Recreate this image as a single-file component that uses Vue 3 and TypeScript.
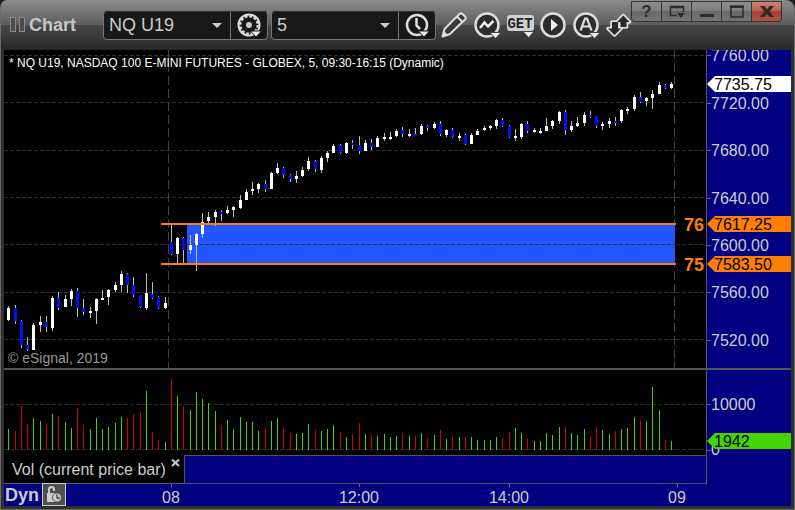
<script setup lang="ts">
import { ref } from 'vue'

type Bar = { x: number; high: number; low: number; top: number; bottom: number; up: boolean }
type VolumeBar = { x: number; top: number; up: boolean }

const symbol = ref('NQ U19')
const interval = ref('5')

const barX = (index: number): number => Math.round(4.335 + 6.253 * index)

// Each bar: high, low, body top, body bottom, direction (1 up, 0 down)
const barRows: number[][] = [
  [256, 271, 258, 270, 1], [255, 274, 258, 271, 0], [270, 298, 271, 295, 0], [287, 301, 295, 299, 0],
  [273, 300, 275, 300, 1], [266, 282, 272, 275, 1], [266, 282, 272, 277, 0], [246, 281, 248, 278, 1],
  [242, 260, 248, 258, 0], [245, 257, 249, 257, 1], [239, 256, 241, 249, 1], [238, 267, 241, 258, 0],
  [249, 265, 258, 262, 0], [257, 268, 261, 263, 1], [248, 274, 249, 261, 1], [240, 250, 248, 250, 1],
  [239, 255, 240, 247, 1], [232, 242, 235, 240, 1], [221, 242, 224, 235, 1], [223, 243, 224, 235, 0],
  [227, 247, 235, 245, 0], [245, 258, 245, 257, 0], [223, 260, 243, 258, 1], [232, 249, 244, 248, 0],
  [246, 259, 247, 258, 0], [247, 259, 253, 258, 1], [174, 205, 192, 204, 0], [187, 213, 188, 204, 1],
  [187, 213, 188, 200, 0], [185, 204, 195, 200, 1], [183, 221, 184, 195, 1], [163, 188, 172, 184, 1],
  [162, 174, 167, 171, 1], [160, 176, 162, 167, 1], [160, 171, 162, 164, 0], [156, 164, 160, 163, 1],
  [156, 167, 157, 160, 1], [145, 159, 150, 158, 1], [139, 150, 142, 150, 1], [132, 145, 139, 141, 1],
  [133, 143, 134, 139, 1], [130, 142, 134, 139, 0], [122, 139, 123, 139, 1], [113, 124, 118, 123, 1],
  [117, 128, 118, 125, 0], [124, 132, 125, 129, 0], [121, 133, 126, 129, 1], [117, 127, 120, 126, 1],
  [107, 121, 111, 119, 1], [110, 122, 111, 119, 0], [106, 123, 108, 120, 1], [101, 112, 103, 108, 1],
  [94, 103, 96, 103, 1], [94, 104, 95, 103, 0], [92, 104, 93, 103, 1], [90, 99, 93, 95, 0],
  [86, 104, 95, 101, 0], [90, 101, 93, 101, 1], [89, 100, 93, 97, 0], [86, 97, 88, 97, 1],
  [83, 91, 87, 89, 1], [82, 90, 87, 89, 1], [79, 87, 81, 86, 1], [77, 87, 80, 84, 0],
  [79, 87, 84, 86, 1], [78, 86, 84, 86, 0], [74, 85, 76, 84, 1], [75, 81, 76, 78, 0],
  [72, 79, 74, 78, 1], [71, 86, 74, 84, 0], [79, 87, 80, 85, 1], [78, 88, 80, 87, 0],
  [83, 91, 86, 88, 1], [84, 95, 85, 94, 0], [83, 94, 85, 94, 1], [79, 85, 81, 85, 1],
  [76, 81, 78, 80, 1], [75, 80, 76, 78, 1], [69, 79, 70, 76, 1], [68, 77, 70, 76, 0],
  [75, 88, 76, 87, 0], [79, 91, 86, 88, 1], [73, 89, 74, 87, 1], [71, 83, 74, 81, 0],
  [78, 83, 80, 82, 1], [78, 84, 81, 83, 1], [68, 81, 76, 81, 1], [70, 79, 71, 76, 1],
  [61, 74, 62, 71, 1], [60, 85, 62, 80, 0], [71, 82, 76, 80, 1], [67, 77, 73, 76, 1],
  [62, 76, 65, 73, 1], [61, 68, 65, 67, 0], [66, 78, 66, 76, 0], [72, 80, 74, 76, 1],
  [68, 78, 71, 74, 1], [67, 76, 71, 73, 0], [59, 73, 60, 71, 1], [57, 64, 59, 61, 1],
  [45, 61, 47, 59, 1], [42, 53, 47, 52, 0], [47, 56, 48, 51, 1], [40, 59, 44, 48, 1],
  [32, 44, 35, 44, 1], [34, 39, 35, 38, 0], [32, 39, 34, 38, 1],
]

const bars: Bar[] = barRows.map(([high, low, top, bottom, up], i) => ({
  x: barX(i), high, low, top, bottom, up: up === 1,
}))

// Height of each volume bar; a negative value marks a down bar
const volumes: number[] = [
  21, -19, -44, -26, 32, 29, -26, 36, -34, 28, 22, -42, -25, 21, 32, 21, 23, 27, 33, -32,
  -36, -38, 59, -18, -10, 8, -71, 54, -44, 40, 58, 51, 47, 39, -25, 30, 21, 33, 28, 28,
  19, -23, 29, 32, -23, -17, 16, 17, 26, -20, 19, 21, 25, -18, 13, -16, -27, 16, -16, 14,
  16, 13, 14, -17, 14, -14, 17, -12, 15, -20, 11, -13, 13, -13, 13, 10, 10, 10, 13, -12,
  -18, 22, 17, -11, 9, 9, 17, 15, 23, -23, 17, 15, 21, -14, -23, 20, 16, -19, 21, 22,
  33, -30, 29, 63, 40, -10, 9,
]

const volumeBars: VolumeBar[] = volumes.map((v, i) => ({ x: barX(i), top: 80 - Math.abs(v), up: v > 0 }))

const priceTicks = [
  { label: '7760.00', grid: 5, y: 5 },
  { label: '7720.00', grid: 52, y: 53 },
  { label: '7680.00', grid: 100, y: 100 },
  { label: '7640.00', grid: 147, y: 148 },
  { label: '7600.00', grid: 194, y: 195 },
  { label: '7560.00', grid: 242, y: 242 },
  { label: '7520.00', grid: 289, y: 290 },
]

const priceTags = [
  { label: '7735.75', y: 26, kind: 'last' },
  { label: '7617.25', y: 166, kind: 'marker' },
  { label: '7583.50', y: 206, kind: 'marker' },
]

const levels = [
  { label: '76', y: 173 },
  { label: '75', y: 213 },
]

const timeTicks = [
  { label: '08', x: 105 },
  { label: '12:00', x: 293 },
  { label: '14:00', x: 443 },
  { label: '09', x: 611 },
]
</script>

<template>
  <main class="window">
    <header class="titlebar">
      <svg class="grip" width="16" height="16" viewBox="0 0 16 16" aria-hidden="true">
        <rect x="0.5" y="0.5" width="5" height="14" />
        <rect x="9.5" y="0.5" width="5" height="14" />
      </svg>
      <h1 class="title">Chart</h1>

      <div class="combo">
        <select v-model="symbol" class="combo-select" aria-label="Symbol">
          <option>NQ U19</option>
        </select>
        <svg class="caret" width="10" height="5" viewBox="0 0 10 5" aria-hidden="true"><path d="M0 0H10L5 5Z" /></svg>
        <button class="combo-button" type="button" aria-label="Symbol settings">
          <svg class="icon" width="26" height="26" viewBox="0 0 26 26" aria-hidden="true">
            <circle cx="13" cy="13" r="10.500" fill="none" stroke="#ddd" stroke-width="2" />
            <circle cx="13" cy="13" r="8.700" fill="none" stroke="#ddd" stroke-width="2.200" stroke-dasharray="2.800 1.755" />
            <circle cx="13" cy="13" r="3" fill="#ccc" />
            <path d="M14.500 19H25.500L20 25Z" fill="#eee" stroke="#181818" />
          </svg>
        </button>
      </div>

      <div class="combo">
        <select v-model="interval" class="combo-select" aria-label="Interval">
          <option>5</option>
        </select>
        <svg class="caret" width="10" height="5" viewBox="0 0 10 5" aria-hidden="true"><path d="M0 0H10L5 5Z" /></svg>
        <button class="combo-button" type="button" aria-label="Interval settings">
          <svg class="icon" width="26" height="26" viewBox="0 0 26 26" aria-hidden="true">
            <circle cx="13" cy="13" r="10" fill="none" stroke="#ddd" stroke-width="2.500" />
            <path d="M12.500 6V13.500L16 17" fill="none" stroke="#ddd" stroke-width="2.500" />
            <path d="M14.500 19H25.500L20 25Z" fill="#eee" stroke="#181818" />
          </svg>
        </button>
      </div>

      <nav class="tools" aria-label="Chart tools">
        <button class="tool" type="button" aria-label="Draw">
          <svg class="icon" width="26" height="26" viewBox="0 0 26 26" aria-hidden="true">
            <path d="M1.500 24.500L3.500 17L18.500 2Q20 0.700 21.500 2L24 4.500Q25.500 6 24 7.500L9 22Z" fill="#383838" stroke="#ddd" stroke-width="2" stroke-linejoin="round" />
            <path d="M16 4.500L21.500 10" stroke="#ddd" stroke-width="2" fill="none" />
            <path d="M1 25L3 19L7 23Z" fill="#ddd" />
          </svg>
        </button>
        <button class="tool" type="button" aria-label="Studies">
          <svg class="icon" width="26" height="26" viewBox="0 0 26 26" aria-hidden="true">
            <circle cx="13" cy="13" r="11.500" fill="#2c2c2c" stroke="#ddd" stroke-width="2.500" />
            <path d="M6 16L10.500 10.500L14 14.500L19.500 9" fill="none" stroke="#eee" stroke-width="2.500" />
            <path d="M16 20.500H27L21.500 26.500Z" fill="#eee" stroke="#444" />
          </svg>
        </button>
        <button class="tool" type="button" aria-label="GET studies">
          <svg class="icon" width="26" height="26" viewBox="0 0 26 26" aria-hidden="true">
            <rect x="0" y="3" width="27" height="16" rx="3" fill="#d0d0d0" />
            <text class="get-text" x="13" y="16" text-anchor="middle">GET</text>
            <path d="M16 19.500H27L21.500 25.500Z" fill="#eee" stroke="#444" />
          </svg>
        </button>
        <button class="tool" type="button" aria-label="Play">
          <svg class="icon" width="26" height="26" viewBox="0 0 26 26" aria-hidden="true">
            <circle cx="13" cy="13" r="11.500" fill="#2c2c2c" stroke="#ddd" stroke-width="2.500" />
            <path d="M11 7L18 13L11 19Z" fill="#eee" />
          </svg>
        </button>
        <button class="tool" type="button" aria-label="Alerts">
          <svg class="icon" width="26" height="26" viewBox="0 0 26 26" aria-hidden="true">
            <circle cx="13" cy="13" r="11.500" fill="#2c2c2c" stroke="#ddd" stroke-width="2.500" />
            <path d="M7.500 18.500L12 6.500H14L18.500 18.500M9 14.500H17" fill="none" stroke="#ddd" stroke-width="2.200" />
            <path d="M16 20.500H27L21.500 26.500Z" fill="#eee" stroke="#444" />
          </svg>
        </button>
        <button class="tool" type="button" aria-label="Trade">
          <svg class="icon" width="26" height="26" viewBox="0 0 26 26" aria-hidden="true">
            <path d="M17.300 3.500L23.500 10H20.500V15H14.500V10H11ZM6 10H12V16.500H15L8.500 23L2 16.500H6Z" fill="#ddd" stroke="#ddd" stroke-width="3.600" stroke-linejoin="round" />
            <path d="M17.300 3.500L23.500 10H20.500V15H14.500V10H11ZM6 10H12V16.500H15L8.500 23L2 16.500H6Z" fill="#2a2a2a" />
          </svg>
        </button>
      </nav>

      <div class="window-buttons">
        <button class="win" type="button" aria-label="Help"><span class="help">?</span></button>
        <button class="win" type="button" aria-label="Dock">
          <svg width="16" height="14" viewBox="0 0 16 14" aria-hidden="true">
            <path d="M8 10.500H1.500V1.500H14.500V7M1 2.500H15" fill="none" stroke="#2c2c2c" stroke-width="1.500" />
            <path d="M8 8H16L12 13Z" fill="#2c2c2c" />
          </svg>
        </button>
        <button class="win" type="button" aria-label="Minimize">
          <svg width="14" height="14" viewBox="0 0 14 14" aria-hidden="true"><path d="M0 9H14V12H0Z" fill="#2c2c2c" /></svg>
        </button>
        <button class="win" type="button" aria-label="Maximize">
          <svg width="14" height="14" viewBox="0 0 14 14" aria-hidden="true">
            <path d="M1 1H13V12H1Z" fill="none" stroke="#2c2c2c" stroke-width="1.500" /><path d="M0 1H14V3H0Z" fill="#2c2c2c" />
          </svg>
        </button>
        <button class="win close" type="button" aria-label="Close">
          <svg width="14" height="12" viewBox="0 0 14 12" aria-hidden="true"><path d="M0 0H4.500L7 3.500L9.500 0H14L9.500 5.500L14 11H9.500L7 7.800L4.500 11H0L4.500 5.500Z" fill="#302a2a" /></svg>
        </button>
      </div>
    </header>

    <section class="workspace">
      <svg class="pane" role="img" aria-label="NQ U19 price chart">
        <g class="grid">
          <line v-for="tick in priceTicks" :key="tick.label" x1="0" x2="100%" :y1="tick.grid + 0.5" :y2="tick.grid + 0.5" />
        </g>
        <g class="session">
          <line x1="164.500" x2="164.500" y1="0" y2="100%" />
          <line x1="670.500" x2="670.500" y1="0" y2="100%" />
        </g>
        <rect class="zone" x="183" y="175" width="488" height="38" />
        <line class="zone-grid" x1="183" x2="671" y1="194.500" y2="194.500" />
        <g v-for="(bar, i) in bars" :key="i" :class="bar.up ? 'bar-up' : 'bar-down'">
          <rect class="wick" :x="bar.x" :y="bar.high" width="1" :height="bar.low - bar.high" />
          <rect class="body" :x="bar.x - 1" :y="bar.top" width="3" :height="bar.bottom - bar.top" />
        </g>
        <g v-for="level in levels" :key="level.y" class="level">
          <rect x="157" :y="level.y" width="515" height="2" />
          <text x="680" :y="level.y + 8">{{ level.label }}</text>
        </g>
        <text class="caption" x="5" y="17">* NQ U19, NASDAQ 100 E-MINI FUTURES - GLOBEX, 5, 09:30-16:15 (Dynamic)</text>
        <text class="credit" x="4" y="313">© eSignal, 2019</text>
      </svg>

      <svg class="axis">
        <g v-for="tick in priceTicks" :key="tick.label">
          <rect class="tick" x="0" :y="tick.y" width="4" height="1" />
          <text x="4" :y="tick.y + 6">{{ tick.label }}</text>
        </g>
        <g v-for="tag in priceTags" :key="tag.label" :class="['tag', tag.kind]">
          <path :d="`M0 ${tag.y + 8}L8 ${tag.y}H84V${tag.y + 16}H8Z`" />
          <text x="7" :y="tag.y + 14">{{ tag.label }}</text>
        </g>
      </svg>

      <svg class="pane volume" role="img" aria-label="Volume chart">
        <g class="grid">
          <line x1="0" x2="100%" y1="34.500" y2="34.500" />
          <line x1="0" x2="100%" y1="79.500" y2="79.500" />
        </g>
        <rect
          v-for="(bar, i) in volumeBars"
          :key="i"
          :class="bar.up ? 'vol-up' : 'vol-down'"
          :x="bar.x" :y="bar.top" width="1" :height="80 - bar.top"
        />
      </svg>

      <svg class="axis volume">
        <rect class="tick" x="0" y="34" width="4" height="1" />
        <text x="4" y="40">10000</text>
        <rect class="tick" x="0" y="80" width="4" height="1" />
        <text x="4" y="85">0</text>
        <g class="tag volume-tag">
          <path d="M0 71L8 63H84V79H8Z" />
          <text x="7" y="77">1942</text>
        </g>
      </svg>

      <div class="tabs">
        <div class="tab">
          <span>Vol (current price bar)</span>
          <button class="tab-close" type="button" aria-label="Close study">
            <svg width="9" height="8" viewBox="0 0 9 8" aria-hidden="true"><path d="M1 0.500L8 7M8 0.500L1 7" stroke="#ccc" stroke-width="2" /></svg>
          </button>
        </div>
      </div>
      <div class="tabs-axis"></div>
    </section>

    <footer class="timebar">
      <strong class="mode">Dyn</strong>
      <button class="lock" type="button" aria-label="Time lock">
        <svg width="16" height="17" viewBox="0 0 16 17" aria-hidden="true">
          <path d="M3 8V3.500Q3 1 5.500 1Q8 1 8 3.500V5" fill="none" stroke="#ccc" stroke-width="2" />
          <rect x="1" y="7" width="9" height="9" fill="#ccc" />
          <circle cx="11" cy="11.500" r="4.500" fill="#ccc" stroke="#555" />
          <path d="M11 8.500V12H14" fill="none" stroke="#444" stroke-width="1.300" />
        </svg>
      </button>
      <svg class="times">
        <g v-for="tick in timeTicks" :key="tick.label">
          <rect class="tick" :x="tick.x" y="1" width="1" height="3" />
          <text :x="tick.x" y="20" text-anchor="middle">{{ tick.label }}</text>
        </g>
      </svg>
    </footer>
  </main>
</template>

<style>
body {
  background: #1c1c1c;
}
</style>

<style scoped>
.window {
  display: flex;
  flex-direction: column;
  min-height: 100vh;
  box-sizing: border-box;
  padding: 0 3px 3px;
  border: 1px solid #6a6a6a;
  border-top: 0;
  border-radius: 7px 9px 0 0;
  overflow: hidden;
  background: linear-gradient(#8c8c8c, #5c5c5c 25px, #474747 25px, #292929 50px, #303030 50px);
  font-family: "Liberation Sans", Arial, sans-serif;
  color: #ccc;
}

button {
  display: flex;
  align-items: center;
  justify-content: center;
  padding: 0;
  border: 0;
  background: none;
  color: inherit;
  font: inherit;
}

svg {
  display: block;
  flex: none;
}

.titlebar {
  display: flex;
  align-items: center;
  height: 50px;
  padding: 0 9px 0 6px;
}

.grip rect {
  fill: #4c4c4c;
  stroke: #8a8a8a;
}

.title {
  width: 74px;
  margin: 0 0 0 3px;
  color: #c6c6c6;
  font-size: 18px;
  line-height: 20px;
}

.combo {
  display: flex;
  align-items: center;
  width: 165px;
  height: 29px;
  margin-right: 3px;
  box-sizing: border-box;
  border: 1px solid #777;
  border-top-color: #333;
  border-radius: 4px;
  background: #181818;
}

.combo-select {
  flex: 1;
  min-width: 0;
  height: 27px;
  padding: 0 0 0 5px;
  border: 0;
  appearance: none;
  background: none;
  color: #ccc;
  font-family: inherit;
  font-size: 18px;
}

.caret {
  margin: 0 8px;
  fill: #ccc;
}

.combo-button {
  width: 37px;
  height: 27px;
  border-left: 1px solid #777;
}

.tools {
  display: flex;
  gap: 8px;
  margin-left: 2px;
}

.tool {
  width: 25px;
  height: 26px;
}

.icon {
  overflow: visible;
}

.get-text {
  fill: #222;
  font-size: 14px;
  font-weight: bold;
  font-family: "Liberation Mono", monospace;
}

.window-buttons {
  display: flex;
  align-self: flex-start;
  margin-left: auto;
  padding-top: 1px;
}

.win {
  width: 30px;
  height: 21px;
  border: 1px solid #333;
  border-left-width: 0;
  background: linear-gradient(#8e8e8e, #7c7c7c 50%, #686868 50%, #747474);
}

.win:first-child {
  width: 31px;
  border-left-width: 1px;
  border-radius: 0 0 0 4px;
}

.win.close {
  border-radius: 0 0 4px 0;
  background: linear-gradient(#c88478, #b85c4c 50%, #a44030 50%, #b05444);
}

.help {
  color: #2c2c2c;
  font-size: 17px;
  font-weight: bold;
  line-height: 18px;
}

.workspace {
  display: grid;
  grid-template-columns: minmax(0, 1fr) 85px;
  grid-template-rows: minmax(320px, 1fr) 85px 28px;
  flex: 1;
}

.pane {
  width: 100%;
  height: 100%;
  box-sizing: border-box;
  border-bottom: 2px solid #555;
  background: #000;
}

.axis {
  width: 100%;
  height: 100%;
  box-sizing: border-box;
  border-left: 1px solid #555;
  border-bottom: 2px solid #555;
  background: #000080;
}

.volume {
  border-bottom: 0;
}

.axis text,
.times text {
  fill: #ccc;
  font-size: 16px;
}

.tick {
  fill: #666;
}

.axis .tag text {
  fill: #000;
}

.last path {
  fill: #fff;
}

.marker path,
.level rect,
.level text {
  fill: #ff8000;
}

.level text {
  font-size: 18px;
  font-weight: bold;
}

.volume-tag path {
  fill: #44d400;
}

.grid line,
.zone-grid {
  stroke: #2c2c2c;
  stroke-dasharray: 4 2;
}

.session line {
  stroke: #444;
  stroke-dasharray: 9 4;
}

.zone {
  fill: #2255ff;
}

.wick {
  fill: #bbb;
}

.bar-up .body {
  fill: #fff;
}

.bar-down .body {
  fill: #0010f0;
}

.vol-up {
  fill: #44d400;
}

.vol-down {
  fill: #d40000;
}

.caption {
  fill: #fff;
  font-size: 12px;
}

.credit {
  fill: #999;
  font-size: 14px;
}

.tabs {
  display: flex;
  border-top: 1px solid #555;
  background: #000080;
}

.tab {
  display: flex;
  justify-content: space-between;
  width: 181px;
  box-sizing: border-box;
  margin-top: -1px;
  padding: 2px 4px 0 8px;
  border-right: 1px solid #555;
  background: #000;
  font-size: 16px;
  line-height: 26px;
  white-space: nowrap;
}

.tab-close {
  width: 9px;
  height: 11px;
}

.tabs-axis {
  border-left: 1px solid #555;
  background: #000080;
}

.timebar {
  display: flex;
  height: 23px;
  background: linear-gradient(to left, #000080 84px, #555 84px) top / 100% 1px no-repeat #000080;
}

.mode {
  width: 37px;
  padding-left: 1px;
  font-size: 18px;
  line-height: 24px;
}

.lock {
  width: 24px;
  height: 23px;
  border: 1px solid #ccc;
  background: #505050;
}

.times {
  flex: 1;
  height: 23px;
}
</style>
